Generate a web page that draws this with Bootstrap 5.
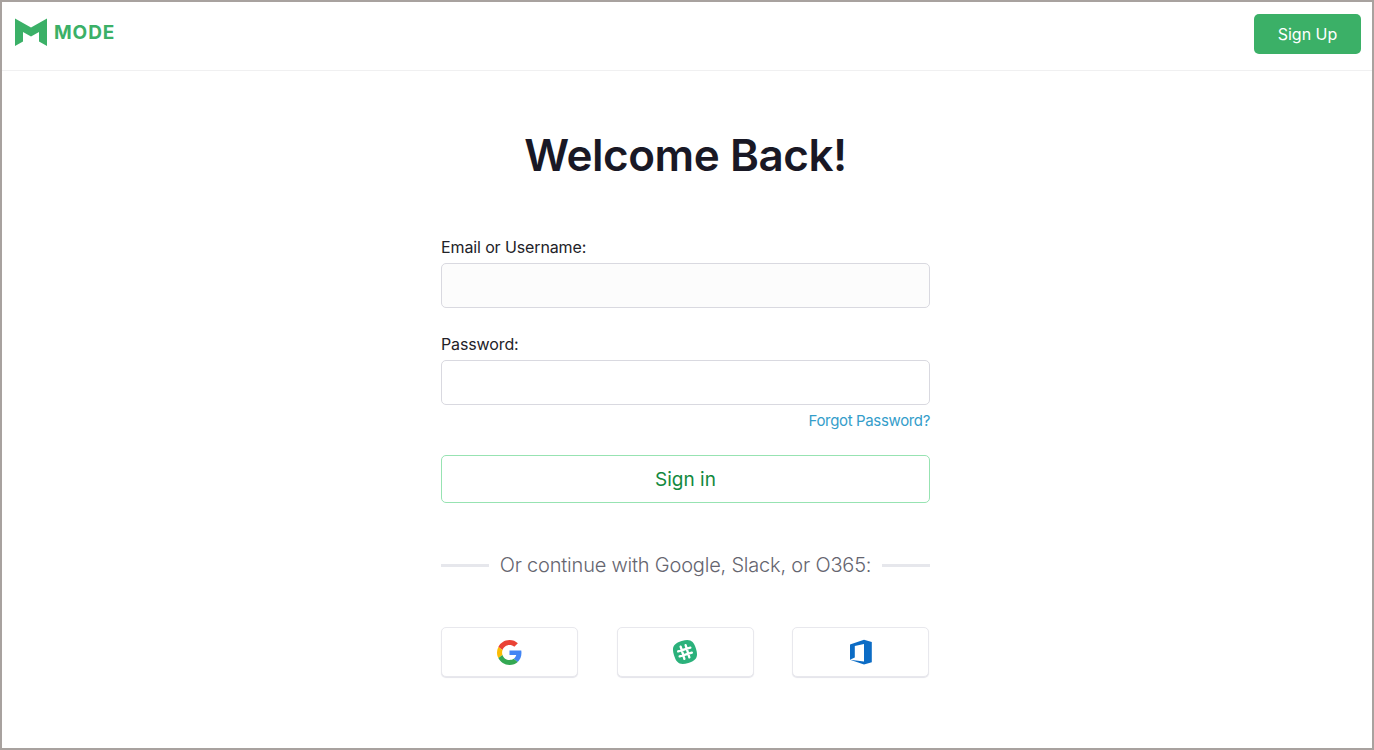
<!DOCTYPE html>
<html lang="en">
<head>
  <meta charset="UTF-8" />
  <meta name="viewport" content="width=device-width, initial-scale=1.0" />
  <title>Mode - Sign in</title>
  <link href="https://cdn.jsdelivr.net/npm/bootstrap@5.3.0/dist/css/bootstrap.min.css" rel="stylesheet" />
  <style>
    body {
      font-family: Inter, "Liberation Sans", sans-serif;
      color: #222228;
    }
    .page {
      height: 100vh;
      border: 2px solid #a8a29f;
      overflow: hidden;
    }
    .site-header {
      height: 69px;
      padding: 12px 11px 0 12px;
      border-bottom: 1px solid #f0f0f1;
    }
    .brand {
      gap: 7px;
      padding-top: 4px;
      color: #3bb067;
      text-decoration: none;
    }
    .brand-name {
      padding-top: 1px;
      font-size: 19px;
      font-weight: 700;
      line-height: 28px;
      letter-spacing: 0.9px;
    }
    .btn-signup {
      width: 107px;
      height: 40px;
      padding: 0;
      border-radius: 5px;
      font-size: 16px;
      color: #fff;
      background: #3bb067;
    }
    .login {
      width: 489px;
      margin-left: 439px;
    }
    h1 {
      margin: 56px 0 0;
      font-size: 44px;
      font-weight: 600;
      line-height: 56px;
      letter-spacing: -0.45px;
      color: #191825;
      white-space: nowrap;
    }
    .form-label {
      display: block;
      width: max-content;
      margin: 0 0 3px;
      font-size: 16px;
      line-height: 25px;
      letter-spacing: -0.12px;
    }
    .form-control {
      height: 45px;
      border: 1px solid #d9d9e0;
      border-radius: 5px;
    }
    .field-email {
      margin-top: 52px;
    }
    .field-email .form-control {
      background: #fcfcfc;
    }
    .field-password {
      margin-top: 24px;
    }
    .forgot {
      margin-top: 5px;
      font-size: 15px;
      line-height: 22px;
      letter-spacing: -0.35px;
      color: #349dca;
      text-decoration: none;
    }
    .btn-signin {
      height: 48px;
      margin-top: 23px;
      padding: 2px 0 0;
      border: 1px solid #97e3b2;
      border-radius: 5px;
      font-size: 19px;
      color: #12893e;
    }
    .divider {
      margin-top: 47px;
      font-size: 20px;
      font-weight: 300;
      line-height: 30px;
      letter-spacing: -0.2px;
      color: #65656f;
      white-space: nowrap;
    }
    .rule {
      width: 48px;
      height: 3px;
      margin-top: 1px;
      background: #e6e7ec;
    }
    .socials {
      margin: 47px 1px 0 0;
    }
    .btn-social {
      width: 137px;
      height: 50px;
      padding: 0;
      border: 1px solid #e8e8ed;
      border-radius: 5px;
      background: #fff;
      box-shadow: 0 1px 1px #e4e4ea;
    }
  </style>
</head>
<body>
  <div class="page">
    <header class="site-header d-flex justify-content-between align-items-start">
      <a href="#" class="brand d-flex align-items-start">
        <svg width="33" height="28" viewBox="0 0 33 28" fill="#3bb067">
          <path d="M1 0.5 17 9.5 33 0.5V28L25 23.5V14L17 18.5 9 14V23.5L1 28Z" />
        </svg>
        <span class="brand-name">MODE</span>
      </a>
      <a href="#" class="btn btn-signup d-flex align-items-center justify-content-center">Sign Up</a>
    </header>

    <main class="login">
      <h1 class="text-center">Welcome Back!</h1>

      <form>
        <div class="field-email">
          <label class="form-label" for="email">Email or Username:</label>
          <input type="text" class="form-control" id="email" />
        </div>
        <div class="field-password">
          <label class="form-label" for="password">Password:</label>
          <input type="password" class="form-control" id="password" />
        </div>
        <div class="d-flex justify-content-end">
          <a href="#" class="forgot">Forgot Password?</a>
        </div>
        <button type="button" class="btn btn-signin w-100 d-flex align-items-center justify-content-center">Sign in</button>
      </form>

      <div class="divider d-flex align-items-center justify-content-between">
        <span class="rule"></span>
        <span>Or continue with Google, Slack, or O365:</span>
        <span class="rule"></span>
      </div>

      <!-- Single sign-on providers -->
      <div class="socials d-flex justify-content-between">
        <button type="button" class="btn btn-social d-flex align-items-center justify-content-center" aria-label="Google">
          <svg width="25" height="25" viewBox="0 0 48 48">
            <path fill="#EA4335" d="M24 9.5c3.54 0 6.71 1.22 9.21 3.6l6.85-6.85C35.9 2.38 30.47 0 24 0 14.62 0 6.51 5.38 2.56 13.22l7.98 6.19C12.43 13.72 17.74 9.5 24 9.5z" />
            <path fill="#4285F4" d="M46.98 24.55c0-1.57-.15-3.09-.38-4.55H24v9.02h12.94c-.58 2.96-2.26 5.48-4.78 7.18l7.73 6c4.51-4.18 7.09-10.36 7.09-17.65z" />
            <path fill="#FBBC05" d="M10.53 28.59c-.48-1.45-.76-2.99-.76-4.59s.27-3.14.76-4.59l-7.98-6.19C.92 16.46 0 20.12 0 24s.92 7.54 2.56 10.78l7.97-6.19z" />
            <path fill="#34A853" d="M24 48c6.48 0 11.93-2.13 15.89-5.81l-7.73-6c-2.15 1.45-4.92 2.3-8.16 2.3-6.26 0-11.57-4.22-13.47-9.91l-7.98 6.19C6.51 42.62 14.62 48 24 48z" />
          </svg>
        </button>
        <button type="button" class="btn btn-social d-flex align-items-center justify-content-center" aria-label="Slack">
          <svg width="26" height="26" viewBox="0 0 26 26">
            <g transform="rotate(-17 13 13)">
              <path fill="#2bb17b" d="M13 1.5C21.6 1.5 24.5 4.4 24.5 13S21.6 24.5 13 24.5 1.5 21.6 1.5 13 4.4 1.5 13 1.5Z" />
              <path d="M10.4 6.6V19.4M15.6 6.6V19.4M6.6 10.4H19.4M6.6 15.6H19.4" fill="none" stroke="#fff" stroke-width="2.3" stroke-linecap="round" />
            </g>
          </svg>
        </button>
        <button type="button" class="btn btn-social d-flex align-items-center justify-content-center" aria-label="Office 365">
          <svg width="24" height="26" viewBox="0 0 24 26" fill="#0c6cc5">
            <path d="M1 5.5 15 0.8 22.8 3V23.3L15 25.6 1 20.8 15 22.4V5L5.8 7V18.6L1 20.7Z" />
          </svg>
        </button>
      </div>
    </main>
  </div>
  <script src="https://cdn.jsdelivr.net/npm/bootstrap@5.3.0/dist/js/bootstrap.bundle.min.js"></script>
</body>
</html>
